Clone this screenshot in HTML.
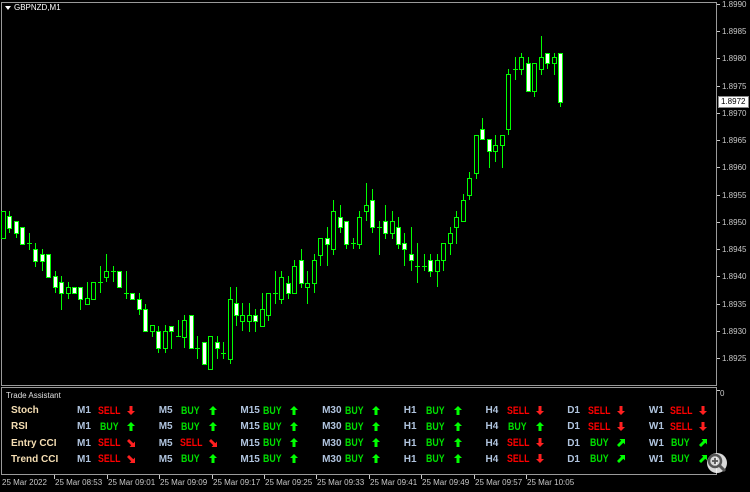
<!DOCTYPE html>
<html><head><meta charset="utf-8"><style>
body{margin:0;background:#000;width:750px;height:492px;overflow:hidden;position:relative;font-family:"Liberation Sans",Arial,sans-serif}
.ax{position:absolute;color:#c8c8c8;font-size:8px;line-height:8px}
.t{position:absolute;font-size:10px;line-height:11px;font-weight:bold;white-space:nowrap}
.v{position:absolute;font-size:11px;line-height:11px;font-weight:bold;white-space:nowrap;transform:scaleX(.8);transform-origin:0 0}
.l{color:#f5deb3}.p{color:#b0c4de}.s{color:#ff0000}.b{color:#00e000}
.a{position:absolute}
</style></head><body>
<svg id="c" width="750" height="492" style="position:absolute;left:0;top:0">
<rect x="1.5" y="2.5" width="715" height="383" fill="none" stroke="#9a9a9a"/>
<rect x="1.5" y="387.5" width="715" height="87" fill="none" stroke="#9a9a9a"/>
<polygon points="5,6 11,6 8,10" fill="#fff"/>
<g id="cg"></g>
<g stroke="#c8c8c8"><line x1="717" y1="4.5" x2="720" y2="4.5"/><line x1="717" y1="31.5" x2="720" y2="31.5"/><line x1="717" y1="58.5" x2="720" y2="58.5"/><line x1="717" y1="86.5" x2="720" y2="86.5"/><line x1="717" y1="113.5" x2="720" y2="113.5"/><line x1="717" y1="140.5" x2="720" y2="140.5"/><line x1="717" y1="167.5" x2="720" y2="167.5"/><line x1="717" y1="195.5" x2="720" y2="195.5"/><line x1="717" y1="222.5" x2="720" y2="222.5"/><line x1="717" y1="249.5" x2="720" y2="249.5"/><line x1="717" y1="276.5" x2="720" y2="276.5"/><line x1="717" y1="304.5" x2="720" y2="304.5"/><line x1="717" y1="331.5" x2="720" y2="331.5"/><line x1="717" y1="358.5" x2="720" y2="358.5"/><line x1="717" y1="390.5" x2="720" y2="390.5"/></g>
<rect x="718.5" y="96.5" width="30" height="11" fill="#fff" stroke="#888"/>
<g id="tk" stroke="#c8c8c8"></g>
<g transform="translate(717,463)"><circle r="10" fill="#fff" opacity=".85"/><circle cx="-2" cy="-2" r="6" fill="none" stroke="#555" stroke-width="2.5"/><line x1="2" y1="2" x2="8" y2="8" stroke="#555" stroke-width="3"/><path d="M-5,-2h6M-2,-5v6" stroke="#555" stroke-width="1.8"/></g>
</svg>
<div class="ax" style="left:14px;top:4px;color:#fff">GBPNZD,M1</div>
<div class="ax" style="left:722px;top:1px">1.8990</div>
<div class="ax" style="left:722px;top:28px">1.8985</div>
<div class="ax" style="left:722px;top:55px">1.8980</div>
<div class="ax" style="left:722px;top:83px">1.8975</div>
<div class="ax" style="left:721px;top:98px;color:#000">1.8972</div>
<div class="ax" style="left:722px;top:110px">1.8970</div>
<div class="ax" style="left:722px;top:137px">1.8965</div>
<div class="ax" style="left:722px;top:164px">1.8960</div>
<div class="ax" style="left:722px;top:192px">1.8955</div>
<div class="ax" style="left:722px;top:219px">1.8950</div>
<div class="ax" style="left:722px;top:246px">1.8945</div>
<div class="ax" style="left:722px;top:273px">1.8940</div>
<div class="ax" style="left:722px;top:301px">1.8935</div>
<div class="ax" style="left:722px;top:328px">1.8930</div>
<div class="ax" style="left:722px;top:355px">1.8925</div>
<div class="ax" style="left:720px;top:390px">0</div>
<div class="ax" style="left:6px;top:392px;color:#e0e0e0">Trade Assistant</div>
<div id="tl"></div>
<div id="tb"></div>
<script>
var D=[[211,211,238,238,0],[211,216,228,233,1],[221,221,233,238,1],[227,227,244,244,1],[233,243,243,250,2],[243,249,261,267,1],[249,254,261,271,1],[254,254,277,277,1],[271,276,287,293,1],[276,282,293,310,1],[282,287,293,299,0],[287,287,293,293,1],[287,287,299,310,1],[282,298,304,304,0],[282,282,299,299,0],[266,282,282,293,2],[254,271,277,282,0],[266,271,271,282,2],[271,271,287,287,1],[271,293,293,299,2],[293,293,299,299,1],[293,299,309,315,1],[304,309,331,331,1],[325,325,331,337,0],[326,331,348,353,1],[325,331,348,353,0],[326,326,331,349,1],[320,336,336,336,2],[315,320,337,348,0],[315,315,348,348,1],[336,348,348,359,2],[342,342,364,364,1],[336,336,369,369,0],[336,342,348,359,1],[342,353,353,359,2],[287,299,359,364,0],[287,303,315,326,1],[303,315,321,331,0],[303,315,321,332,0],[309,315,321,332,1],[293,309,326,326,0],[293,293,315,321,0],[271,293,293,304,2],[271,277,299,304,0],[276,283,293,299,1],[260,266,293,293,0],[249,260,283,288,1],[271,283,287,304,0],[254,260,283,293,0],[238,238,255,266,0],[227,238,244,266,1],[200,211,249,255,0],[205,217,227,233,1],[221,221,244,249,1],[238,243,243,249,2],[211,217,244,249,0],[183,205,211,221,0],[189,200,227,233,1],[221,227,227,255,2],[205,221,233,239,1],[211,221,233,239,0],[217,227,244,249,1],[233,243,249,266,1],[227,254,260,271,1],[243,266,266,283,2],[254,266,266,271,2],[254,260,271,277,1],[254,260,271,287,0],[243,243,260,271,0],[227,233,243,255,0],[211,217,227,244,0],[194,200,221,221,0],[172,178,195,200,0],[135,135,173,179,0],[118,129,139,139,1],[139,139,151,168,1],[135,145,151,162,0],[135,135,145,168,0],[69,74,129,135,0],[57,69,69,80,2],[53,57,69,75,0],[57,63,91,91,1],[63,63,91,97,0],[36,57,69,75,0],[53,53,63,69,1],[53,57,63,75,0],[53,53,102,107,1]];
var st=557.3/(D.length-1),s='';D.forEach(function(d,i){var x=Math.round(2.7+st*i);s+='<line x1="'+(x+.5)+'" y1="'+d[0]+'" x2="'+(x+.5)+'" y2="'+d[3]+'" stroke="#00ff00"/>';
if(d[4]==2)s+='<line x1="'+(x-2)+'" y1="'+(d[1]+.5)+'" x2="'+(x+3)+'" y2="'+(d[1]+.5)+'" stroke="#00ff00"/>';
else s+='<rect x="'+(x-1.5)+'" y="'+(d[1]+.5)+'" width="4" height="'+Math.max(2,d[2]-d[1])+'" fill="'+(d[4]?'#fff':'#000')+'" stroke="#00ff00"/>';});
document.getElementById('cg').innerHTML=s;
var T=['25 Mar 2022','25 Mar 08:53','25 Mar 09:01','25 Mar 09:09','25 Mar 09:17','25 Mar 09:25','25 Mar 09:33','25 Mar 09:41','25 Mar 09:49','25 Mar 09:57','25 Mar 10:05'],h='',k='';
T.forEach(function(t,i){var x=Math.round(2+52.4*i);h+='<div class="ax" style="left:'+(i?x+1:x)+'px;top:479px">'+t+'</div>';if(i)k+='<line x1="'+(x+.5)+'" y1="475" x2="'+(x+.5)+'" y2="479"/>';});
document.getElementById('tl').innerHTML=h;document.getElementById('tk').innerHTML=k;
var L=['Stoch','RSI','Entry CCI','Trend CCI'],P=['M1','M5','M15','M30','H1','H4','D1','W1'];
var S=[['S','U','U','U','U','S','S','S'],['U','U','U','U','U','U','S','S'],['R','R','U','U','U','S','N','N'],['R','U','U','U','U','S','N','N']];
var AP={U:'M4,0 L8,4 L5.5,4 L5.5,9 L2.5,9 L2.5,4 L0,4Z',S:'M4,9 L8,5 L5.5,5 L5.5,0 L2.5,0 L2.5,5 L0,5Z',R:'M8,8 L8,2.5 L6.3,4.2 L2,0 L0,2 L4.2,6.3 L2.5,8Z',N:'M8,0 L8,5.5 L6.3,3.8 L2,8 L0,6 L4.2,1.7 L2.5,0Z'};
var o='';
L.forEach(function(l,r){var y=405+16.3*r;o+='<div class="t l" style="left:11px;top:'+y+'px">'+l+'</div>';
P.forEach(function(p,c){var x=77+81.7*c,v=S[r][c],sell=(v=='S'||v=='R');
o+='<div class="t p" style="left:'+x+'px;top:'+y+'px">'+p+'</div>';
o+='<div class="v '+(sell?'s':'b')+'" style="left:'+(x+(sell?21:22.5))+'px;top:'+(y+0.5)+'px">'+(sell?'SELL':'BUY')+'</div>';
var ay=(v=='R'||v=='N')?y+1.5:y+0.5;
o+='<svg class="a" width="8" height="9" style="left:'+(x+50)+'px;top:'+ay+'px"><path d="'+AP[v]+'" fill="'+(sell?'#ff2020':'#00ff00')+'"/></svg>';});});
document.getElementById('tb').innerHTML=o;
</script>
</body></html>
